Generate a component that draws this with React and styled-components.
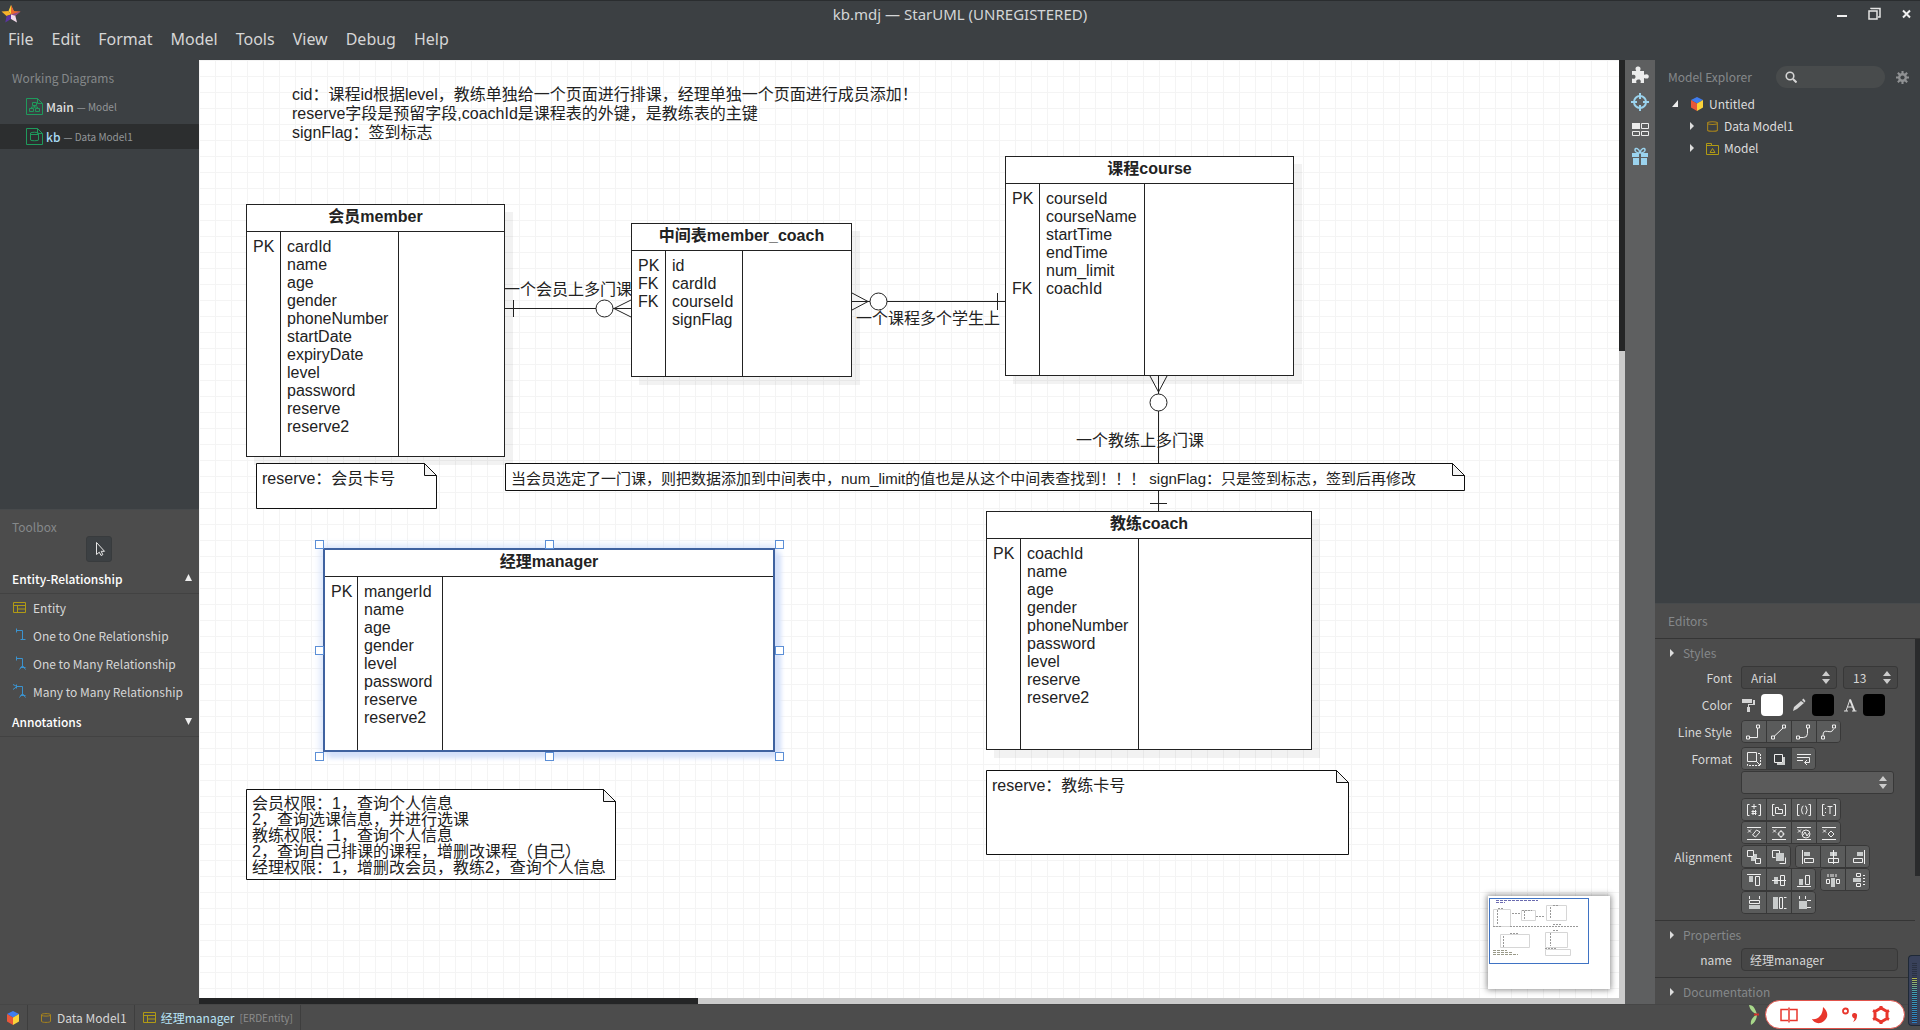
import React from "react";
import styled, { createGlobalStyle, css } from "styled-components";

const UI_FONT = '"Noto Sans CJK SC", "Noto Sans", sans-serif';
const MENU_FONT = '"Noto Sans", "Open Sans", sans-serif';
const DIAGRAM_FONT = '"Liberation Sans", "Noto Sans CJK SC", sans-serif';

const GlobalStyle = createGlobalStyle`
  *, *::before, *::after { box-sizing: border-box; }
  body {
    margin: 0;
    background: #3c4043;
    color: #d6d6d6;
    font: 12px/18px ${UI_FONT};
    overflow: hidden;
  }
  button, input, select { font: inherit; color: inherit; margin: 0; }
  h2, h3, ul { margin: 0; padding: 0; font: inherit; }
  ul { list-style: none; }
`;

/* ---------- window frame ---------- */

const Window = styled.div`
  height: 100vh;
  display: flex;
  flex-direction: column;
  border-top: 1px solid #2a2d2f;
`;

const TitleBar = styled.header`
  height: 26px;
  flex: none;
  display: grid;
  grid-template-columns: 1fr auto 1fr;
  align-items: center;
  font: 15px/20px ${MENU_FONT};
  color: #d4d6d7;
`;

const AppLogo = styled.div`
  padding-left: 1px;
  height: 20px;
  svg { display: block; }
`;

const WindowControls = styled.div`
  display: flex;
  justify-content: flex-end;
  gap: 14px;
  padding-right: 5px;
`;

const WindowButton = styled.button`
  border: 0;
  padding: 0;
  background: none;
  width: 18px;
  height: 18px;
  svg { display: block; }
`;

const MenuBar = styled.nav`
  height: 33px;
  flex: none;
  display: flex;
  gap: 18px;
  padding: 0 8px;
`;

const MenuItem = styled.button`
  border: 0;
  padding: 0;
  background: none;
  font: 16px/22px ${MENU_FONT};
  height: 24px;
`;

const Workspace = styled.div`
  flex: 1;
  min-height: 0;
  display: flex;
`;

const Sidebar = styled.aside`
  width: 199px;
  flex: none;
  display: flex;
  flex-direction: column;
`;

const RightPanel = styled(Sidebar)`
  width: 265px;
`;

const Pane = styled.section`
  flex: ${(p) => p.$share} 1 0;
  min-height: 0;
  overflow: hidden;
  background: ${(p) => (p.$raised ? "#4c4c4c" : "#3c4043")};
  border-top: ${(p) => (p.$raised ? "1px solid #474a4c" : "0")};
`;

const PaneTitle = styled.h2`
  color: #85888a;
  line-height: 18px;
  padding: ${(p) => p.$pad || "9px 12px"};
`;

/* ---------- working diagrams ---------- */

const DiagramRow = styled.li`
  display: flex;
  align-items: center;
  gap: 3px;
  height: 25px;
  margin-bottom: 5px;
  padding-left: 26px;
  background: ${(p) => (p.$active ? "#2c2e2f" : "none")};
  font-size: 10px;
  color: #939698;
  b { font-size: 12px; font-weight: 500; color: ${(p) => (p.$active ? "#a9dcf5" : "#dedede")}; }
`;

/* ---------- toolbox ---------- */

const CursorTool = styled.button`
  display: block;
  width: 26px;
  height: 26px;
  margin: 0 0 4px 86px;
  padding: 5px;
  border: 1px solid #383b3d;
  border-radius: 3px;
  background: #3c4043;
  svg { display: block; }
`;

const ToolGroup = styled.button`
  display: flex;
  align-items: center;
  justify-content: space-between;
  width: 100%;
  height: 28px;
  padding: 0 7px 0 12px;
  border: 0;
  border-bottom: 1px solid #424242;
  background: none;
  color: #fff;
  font-weight: 500;
`;

const ToolList = styled.div`
  padding-bottom: 3px;
`;

const ToolRow = styled.button`
  display: flex;
  align-items: center;
  gap: 7px;
  width: 100%;
  height: 28px;
  padding: 0 0 0 13px;
  border: 0;
  background: none;
`;

/* ---------- canvas ---------- */

const CanvasFrame = styled.main`
  flex: 1;
  min-width: 0;
  display: grid;
  grid-template-columns: 1fr 6px;
  grid-template-rows: 1fr 6px;
`;

const Canvas = styled.div`
  position: relative;
  overflow: hidden;
  background-color: #fff;
  background-image: linear-gradient(to right, #f4f4f4 1px, transparent 1px),
    linear-gradient(to bottom, #f4f4f4 1px, transparent 1px);
  background-size: 16px 16px;
  font: 16px/18px ${DIAGRAM_FONT};
  color: #222;
  white-space: nowrap;
`;

const ScrollTrack = styled.div`
  background: #cbcbcb;
  grid-column: ${(p) => (p.$horizontal ? "1 / 3" : "auto")};
`;

const ScrollThumb = styled.div`
  background: #242526;
  width: ${(p) => (p.$horizontal ? "35%" : "100%")};
  height: ${(p) => (p.$horizontal ? "100%" : "31%")};
`;

const Connectors = styled.svg`
  position: absolute;
  inset: 0;
  width: 100%;
  height: 100%;
  fill: #fff;
  stroke: #222;
`;

const EntityBox = styled.article`
  position: absolute;
  left: ${(p) => p.$x}px;
  top: ${(p) => p.$y}px;
  width: ${(p) => p.$w}px;
  height: ${(p) => p.$h}px;
  display: flex;
  flex-direction: column;
  background: #fff;
  border: 1px solid #222;
  box-shadow: 8px 8px 0 rgba(0, 0, 0, 0.05);
  ${(p) =>
    p.$selected &&
    css`
      border: 2px solid #3f62a0;
      box-shadow: 0 0 8px 2px #d0defa, 6px 6px 4px #dbe4fa;
    `}
`;

const EntityTitle = styled.h3`
  flex: none;
  height: 27px;
  padding-top: 3px;
  text-align: center;
  font-weight: bold;
  border-bottom: 1px solid #222;
`;

const EntityBody = styled.div`
  flex: 1;
  display: grid;
  grid-template-columns: ${(p) => p.$cols} 1fr;
`;

const EntityColumn = styled.ul`
  padding: 6px 0 0 6px;
  border-right: 1px solid #222;
  &:last-child { border-right: 0; }
  li { height: 18px; }
`;

const Handle = styled.i`
  position: absolute;
  left: ${(p) => p.$x};
  top: ${(p) => p.$y};
  width: 9px;
  height: 9px;
  margin: -5px;
  background: #fff;
  border: 1px solid #5c8fd6;
`;

const NoteBox = styled.div`
  position: absolute;
  left: ${(p) => p.$x}px;
  top: ${(p) => p.$y}px;
  width: ${(p) => p.$w}px;
  height: ${(p) => p.$h}px;
  padding: 7px 6px;
  white-space: pre;
  isolation: isolate;
  font-size: ${(p) => (p.$small ? 15 : 16)}px;
  line-height: ${(p) => (p.$compact ? "16px" : "18px")};
`;

const NoteShape = styled.svg`
  position: absolute;
  inset: 0;
  width: 100%;
  height: 100%;
  z-index: -1;
`;

const CanvasText = styled.div`
  position: absolute;
  left: ${(p) => p.$x}px;
  top: ${(p) => p.$y}px;
  white-space: pre;
  line-height: ${(p) => (p.$loose ? "19px" : "18px")};
`;

const Minimap = styled.div`
  position: absolute;
  right: 9px;
  bottom: 9px;
  width: 122px;
  height: 93px;
  background: #fff;
  box-shadow: 0 0 6px 1px rgba(0, 0, 0, 0.45);
  svg { display: block; }
`;

/* ---------- icon rail ---------- */

const Rail = styled.div`
  width: 30px;
  flex: none;
  display: flex;
  flex-direction: column;
  align-items: center;
  gap: 9px;
  padding-top: 6px;
  background: #5e5f60;
`;

const RailButton = styled.button`
  width: 18px;
  height: 18px;
  border: 0;
  padding: 0;
  background: none;
  svg { display: block; }
`;

/* ---------- model explorer ---------- */

const ExplorerHeader = styled.div`
  display: flex;
  align-items: center;
  padding: 6px 11px 5px 0;
`;

const SearchBox = styled.label`
  display: flex;
  align-items: center;
  gap: 4px;
  width: 109px;
  height: 22px;
  margin: 0 11px 0 auto;
  padding-left: 9px;
  border-radius: 11px;
  background: #484b4c;
  input { width: 72px; border: 0; padding: 0; background: none; outline: 0; }
`;

const TreeRow = styled.li`
  display: flex;
  align-items: center;
  height: 22px;
  padding-left: ${(p) => p.$indent}px;
  gap: ${(p) => p.$gap}px;
  color: #dcdcdc;
  svg { flex: none; }
`;

const TreeLabel = styled.span`
  display: flex;
  align-items: center;
  gap: 5px;
`;

/* ---------- editors ---------- */

const EditorsTitle = styled(PaneTitle)`
  border-bottom: 1px solid #353535;
`;

const EditorsScroller = styled.div`
  display: grid;
  grid-template-columns: 1fr 5px;
`;

const EditorsThumb = styled.div`
  height: 237px;
  background: #2a2b2c;
`;

const SectionTitle = styled.h3`
  display: flex;
  align-items: center;
  gap: 8px;
  height: 27px;
  padding-left: 15px;
  color: #85888a;
`;

const Section = styled.div`
  border-bottom: 1px solid #353535;
  padding-bottom: 6px;
`;

const Field = styled.div`
  display: grid;
  grid-template-columns: 77px 1fr;
  column-gap: 9px;
  align-items: center;
  margin-bottom: ${(p) => p.$after || 0}px;
`;

const FieldLabel = styled.label`
  text-align: right;
`;

const FieldRow = styled.div`
  display: flex;
  align-items: center;
  gap: ${(p) => p.$gap || 0}px;
`;

const SelectFrame = styled.div`
  position: relative;
  width: ${(p) => p.$w}px;
  svg { position: absolute; right: 7px; top: 5px; pointer-events: none; }
  select {
    appearance: none;
    display: block;
    width: 100%;
    height: 23px;
    padding: 0 9px;
    border: 1px solid #383838;
    border-radius: 3px;
    background: ${(p) => (p.$light ? "#5b5b5b" : "#464646")};
    outline: 0;
  }
`;

const Swatch = styled.button`
  width: 22px;
  height: 22px;
  padding: 0;
  border: 0;
  border-radius: 4px;
  margin-right: 9px;
  background: ${(p) => p.$color};
`;

const ColorIcon = styled.span`
  width: 14px;
  height: 14px;
  margin-right: 6px;
  svg { display: block; }
`;

const ButtonGroup = styled.div`
  display: flex;
  border: 1px solid #383838;
  border-radius: 4px;
  overflow: hidden;
`;

const IconButton = styled.button`
  width: 25px;
  height: 21px;
  padding: 2px 4px;
  border: 0;
  border-right: 1px solid #383838;
  background: ${(p) => (p.$pressed ? "#3b3e40" : "#5a5b5b")};
  &:last-child { border-right: 0; width: 23px; }
  svg { display: block; }
`;

const NameInput = styled.input`
  width: 157px;
  height: 23px;
  padding: 0 8px;
  border: 1px solid #383838;
  border-radius: 4px;
  background: #464646;
  outline: 0;
`;

/* ---------- status bar ---------- */

const StatusBar = styled.footer`
  height: 26px;
  flex: none;
  display: flex;
  background: #4c4c4c;
  border-top: 1px solid #464646;
`;

const Crumb = styled.div`
  display: flex;
  align-items: center;
  gap: 5px;
  padding: 0 7px 0 ${(p) => p.$lead}px;
  border-right: 1px solid #3e3e3e;
  strong { font-weight: 400; color: #b9e4f7; }
  small { font-size: 10px; color: #8d8d8d; }
`;

const ImeBar = styled.div`
  position: fixed;
  right: 15px;
  bottom: 1px;
  display: flex;
  align-items: center;
  justify-content: space-between;
  width: 140px;
  height: 29px;
  padding: 0 14px;
  border-radius: 15px;
  border: 1px solid #e2544c;
  background: #fff;
  button { border: 0; padding: 0; background: none; height: 18px; }
  svg { display: block; }
`;

const ImeLeaf = styled.svg`
  position: fixed;
  right: 160px;
  bottom: 4px;
`;

const Meter = styled.div`
  position: fixed;
  right: 0;
  bottom: 4px;
  width: 12px;
  height: 71px;
  padding: 6px 3px 2px;
  border: 1px solid #1f2937;
  border-right: 0;
  border-radius: 4px 0 0 4px;
  background: #39415a;
  div {
    height: 100%;
    background: repeating-linear-gradient(transparent 0 1px, #2a3142 1px 2px),
      linear-gradient(#39415a 0 26%, #b9b94a 26%, #3f9fb5 50%, #2c7ec0);
  }
`;

/* ---------- icons ---------- */

const Svg = ({ w = 16, h, vb, children, ...rest }) => (
  <svg width={w} height={h || w} viewBox={vb || `0 0 ${w} ${h || w}`} fill="none" aria-hidden="true" {...rest}>
    {children}
  </svg>
);

const StarLogo = () => (
  <Svg w={20}>
    <path d="M10 1l2.600 6L10 10.500 7.500 7z" fill="#fbd23a" />
    <path d="M7.500 7L0.500 7.500 5.600 12 10 10.500z" fill="#f7b32a" />
    <path d="M10 1l3 6 6.500.5-5.200 4.300L10 10.500z" fill="#e8672f" />
    <path d="M19.500 7.500l-5.200 4.300L10 10.500z" fill="#8a4a8f" />
    <path d="M14.300 11.800L16 18.500 10 15v-4.500z" fill="#f3dcec" />
    <path d="M10 15v-4.500l-4.400 1.500L4.300 18.500z" fill="#5b35a0" />
  </Svg>
);

const Cube = () => (
  <Svg w={14}>
    <path d="M7 0l6 3-6 3.500L1 3z" fill="#3f7df0" />
    <path d="M1 3l6 3.500V14l-6-3.500z" fill="#e8573a" />
    <path d="M13 3L7 6.500V14l6-3.500z" fill="#fbd23a" />
  </Svg>
);

const DiagramIcon = ({ data }) => (
  <Svg w={17} stroke="#1f9a5c">
    <path d="M0.500 0.500h11l5 5v11H0.500z M11.500 0.500v5h5" />
    {data ? <path d="M4.500 5c1-1 7-1 8 0v7c-1 1-7 1-8 0z M4.500 6.500h8" /> : <path d="M6.500 4.500h4v3h-4z M3.500 10.500h4v3h-4z M9.500 10.500h4v3h-4z M8.500 7.500v2M5.500 10V9h6v1" />}
  </Svg>
);

const TableIcon = () => (
  <Svg w={13} stroke="#b09a14">
    <path d="M0.500 1.500h12v10H0.500z M0.500 4.500h12 M4.500 4.500v7 M4.500 8h8" />
  </Svg>
);

const DataIcon = ({ w = 12 }) => (
  <Svg w={w} vb="0 0 12 12" stroke="#a8841c">
    <path d="M1.500 2.500c1-1.200 8-1.200 9 0v7c-1 1.200-8 1.200-9 0z M1.500 3.500c2 .8 7 .8 9 0" />
  </Svg>
);

const PackageIcon = () => (
  <Svg w={13} stroke="#b09a14">
    <path d="M0.500 1.500h5v2h7v9H0.500z M0.500 3.500h5 M4 10.500h5l-2.500-4z" />
  </Svg>
);

const RelationIcon = ({ kind }) => (
  <Svg w={13} h={16} stroke="#3b93cf">
    <path d="M3.500 2.500h6v9 M3.500 0.500v4 M7.500 11.500h5" />
    {kind > 0 && <path d="M9.500 9.500l-3 4M9.500 9.500l3 4" />}
    {kind > 1 && <path d="M4 2.500l-4-2M4 2.500l-4 3" />}
  </Svg>
);

const Caret = ({ dir = "right" }) => {
  const shapes = { up: "M0 7h7L3.500 0z", down: "M0 1h7L3.500 8z", corner: "M6 1v7H0z" };
  return (
    <Svg w={7} h={10}>
      <path d={shapes[dir]} fill="#eee" />
    </Svg>
  );
};

const SmallCaret = () => (
  <Svg w={5} h={8}>
    <path d="M0 0l4 4-4 4z" fill="#ddd" />
  </Svg>
);

const Spinner = () => (
  <Svg w={8} h={13}>
    <path d="M0 5h8L4 0z M0 8h8L4 13z" fill="#ccc" />
  </Svg>
);

const Gear = ({ size = 13, color = "#8f9193", hole = "#3c4043" }) => (
  <Svg w={size} vb="0 0 16 16">
    <circle cx="8" cy="8" r="5.500" fill={color} />
    <path d="M8 0v16M0 8h16M2.300 2.300l11.400 11.400M13.700 2.300L2.300 13.700" stroke={color} strokeWidth="2.600" />
    <circle cx="8" cy="8" r="2.600" fill={hole} />
  </Svg>
);

const ImeGear = () => (
  <Svg w={18} stroke="#e8362c" strokeWidth="3">
    <path d="M9 2l6 3.500v7L9 16l-6-3.500v-7z" strokeLinejoin="round" />
    <path d="M9 0v3M9 15v3M1 4.500L4 6M14 12l3 1.500M17 4.500L14 6M4 12l-3 1.500" />
  </Svg>
);

/* Glyphs of the editor buttons, drawn on a 16 x 16 grid: [outline, solid, dashed] */
const GLYPHS = {
  rect: ["M3 13.500h8.500V4 M0.500 12h3v3h-3z M10.500 1h3v3h-3z"],
  oblique: ["M3 12.500L12 4 M0.500 12h3v3h-3z M11.500 1h3v3h-3z"],
  round: ["M3 13.500h4.500q4 0 4-4V4 M0.500 12h3v3h-3z M10.500 1h3v3h-3z"],
  curve: ["M2 12c0-10 8 0 10.500-7 M0.500 12h3v3h-3z M11.500 1h3v3h-3z"],
  resize: ["M1.500 1.500h9v9h-9z M10 10l4 4", null, "M12 2.500h2.500v12h-13V12"],
  shadow: ["M3.500 3.500h8v8h-8z", "M12 6h2v8H6v-2h6z"],
  wrap: ["M1 3.500h14M1 6.500h12.500v5H9 M1 9.500h6 M11 9l-2.500 2.500L11 14"],
  vis: ["M3.500 2.500h-2v11h2 M12.500 2.500h2v11h-2 M5.500 4.500h5M8 2v5 M5.500 9.500h5 M5.500 11.500h5 M7 8v5 M9.500 8v5"],
  ns: ["M3.500 2.500h-2v11h2 M12.500 2.500h2v11h-2 M4.500 5.500h3v2h4v4h-7z"],
  prop: ["M3.500 2.500h-2v11h2 M12.500 2.500h2v11h-2 M7.500 4q-1.500 0-1.500 2t-1 2q1 0 1 2t1.500 2 M9 4q1.500 0 1.500 2t1 2q-1 0-1 2T9 12"],
  type: ["M3.500 2.500h-2v11h2 M12.500 2.500h2v11h-2 M6.500 4.500h5M9 4.500V12 M4.500 6v1M4.500 10v1"],
  noAttr: ["M1 2.500h14M1 14.500h14 M2 4.500l3 3M5 4.500l-3 3 M6.500 10l4-5 3.500 2-4.500 5z"],
  noOp: ["M1 2.500h14M1 14.500h14 M2 4.500l3 3M5 4.500l-3 3 M10 6.500a2.500 2.500 0 1 1 0 5 2.500 2.500 0 1 1 0-5z M10 5v2M10 11v2M6.500 9h2M11.500 9h2"],
  noRec: ["M1 2.500h14M1 14.500h14 M2 4.500l3 3M5 4.500l-3 3 M10 5a4 4 0 1 1 0 8 4 4 0 1 1 0-8z M7 10l2-3 2 4 2-3"],
  noLit: ["M1 2.500h14M1 14.500h14 M2 4.500l3 3M5 4.500l-3 3 M10 6l3 3-3 3-3-3z"],
  front: ["M1.500 1.500h6v6h-6z M9.500 9.500h5v5h-5z", "M8 5h3v4H9v3H5V8h3z"],
  back: ["M1.500 1.500h7v3 M1.500 1.500v7h3 M8.500 14.500h6v-6", "M5 4h8v8H5z"],
  left: ["M2.500 1v14 M4.500 9.500h9v4h-9z", "M4 3h6v4H4z"],
  center: ["M8.500 1v14 M3.500 9.500h10v4h-10z", "M5 3h7v4H5z"],
  right: ["M14.500 1v14 M3.500 9.500h9v4h-9z", "M7 3h6v4H7z"],
  top: ["M1 2.500h14 M9.500 4.500h4v9h-4z", "M3 4h4v6H3z"],
  middle: ["M1 8.500h14 M9.500 3.500h4v10h-4z", "M3 5h4v7H3z"],
  bottom: ["M1 14.500h14 M9.500 3.500h4v9h-4z", "M3 7h4v6H3z"],
  spaceH: ["M1.500 7.500h3v4h-3z M11.500 7.500h3v4h-3z M3 2v3M6 2v3M8 2v3M11 2v3", "M6 6h4v9H6z"],
  spaceV: ["M6.500 1.500h4v3h-4z M6.500 11.500h4v3h-4z M13 3.500h2M13 6.500h2M13 9.500h2M13 12.500h2", "M3 6h8v4H3z"],
  width: ["M3.500 1v3M13.500 1v3 M3.500 5.500h10v3h-10z", "M3 10h11v4H3z"],
  height: ["M8.500 2.500h3v11h-3z M13 2.500h2.500M13 13.500h2.500", "M2 2h5v12H2z"],
  size: ["M3.500 1v3M9.500 1v3 M11 5.500h4M11 12.500h4", "M3 6h8v8H3z"],
};

const Glyph = ({ name }) => {
  const [line, solid, dashed] = GLYPHS[name];
  return (
    <Svg w={16}>
      {solid && <path d={solid} fill="#c9cccc" />}
      <path d={line} stroke="#efefef" />
      {dashed && <path d={dashed} stroke="#efefef" strokeDasharray="2 1" />}
    </Svg>
  );
};

const Buttons = ({ items }) => (
  <ButtonGroup>
    {items.map(([glyph, label, pressed]) => (
      <IconButton key={glyph} type="button" aria-label={label} $pressed={pressed}>
        <Glyph name={glyph} />
      </IconButton>
    ))}
  </ButtonGroup>
);

const ButtonField = ({ label, after, groups }) => (
  <Field $after={after}>
    <FieldLabel as="span">{label}</FieldLabel>
    <FieldRow $gap={4}>
      {groups.map((items) => <Buttons key={items[0][0]} items={items} />)}
    </FieldRow>
  </Field>
);

/* ---------- diagram ---------- */

const ENTITIES = [
  { name: "会员member", x: 47, y: 144, w: 259, h: 253, cols: "34px 118px", keys: ["PK"], fields: ["cardId", "name", "age", "gender", "phoneNumber", "startDate", "expiryDate", "level", "password", "reserve", "reserve2"] },
  { name: "中间表member_coach", x: 432, y: 163, w: 221, h: 154, cols: "34px 77px", keys: ["PK", "FK", "FK"], fields: ["id", "cardId", "courseId", "signFlag"] },
  { name: "课程course", x: 806, y: 96, w: 289, h: 220, cols: "34px 105px", keys: ["PK", "", "", "", "", "FK"], fields: ["courseId", "courseName", "startTime", "endTime", "num_limit", "coachId"] },
  { name: "教练coach", x: 787, y: 451, w: 326, h: 239, cols: "34px 118px", keys: ["PK"], fields: ["coachId", "name", "age", "gender", "phoneNumber", "password", "level", "reserve", "reserve2"] },
  { name: "经理manager", x: 124, y: 488, w: 452, h: 204, cols: "33px 85px", keys: ["PK"], fields: ["mangerId", "name", "age", "gender", "level", "password", "reserve", "reserve2"], selected: true },
];

const NEAR = "-5px";
const MID = "calc(50% + 1px)";
const FAR = "calc(100% + 7px)";
const HANDLES = [[NEAR, NEAR], [MID, NEAR], [FAR, NEAR], [NEAR, MID], [FAR, MID], [NEAR, FAR], [MID, FAR], [FAR, FAR]];

const Entity = ({ name, x, y, w, h, cols, keys, fields, selected }) => (
  <EntityBox $x={x} $y={y} $w={w} $h={h} $selected={selected}>
    <EntityTitle>{name}</EntityTitle>
    <EntityBody $cols={cols}>
      <EntityColumn>{keys.map((k, i) => <li key={i}>{k}</li>)}</EntityColumn>
      <EntityColumn>{fields.map((f) => <li key={f}>{f}</li>)}</EntityColumn>
      <EntityColumn />
    </EntityBody>
    {selected && HANDLES.map(([hx, hy]) => <Handle key={hx + hy} $x={hx} $y={hy} />)}
  </EntityBox>
);

const Note = ({ x, y, w, h, children, ...rest }) => (
  <NoteBox $x={x} $y={y} $w={w} $h={h} {...rest}>
    <NoteShape viewBox={`0 0 ${w} ${h}`} aria-hidden="true">
      <path d={`M.5.5H${w - 12.5}l12 12V${h - 0.5}H.5z`} fill="#fff" stroke="#111" />
      <path d={`M${w - 12.5}.5v12h12z`} fill="#f4f4f4" stroke="#111" />
    </NoteShape>
    {children}
  </NoteBox>
);

const ConnectorLines = () => (
  <Connectors aria-hidden="true">
    <path d="M306 248.500H432 M314.500 240v17 M432 240l-17 8.500 17 8.500" />
    <circle cx="405.500" cy="248.500" r="8.500" />
    <path d="M653 241.500H806 M798.500 233v17 M653 233l16 8.500-16 8.500" />
    <circle cx="679.500" cy="241.500" r="8.500" />
    <path d="M959.500 316V452 M951 443.500h17 M951 316l8.500 16 8.500-16" />
    <circle cx="959.500" cy="342.500" r="8.500" />
  </Connectors>
);

const MinimapDrawing = () => (
  <Svg w={122} h={93}>
    <g stroke="#d6d6d6">
      <path d="M5.500 13.500h17v17h-17zM33.500 14.500h14v10h-14zM58.500 9.500h20v15h-20zM57.500 36.500h22v15h-22zM12.500 38.500h29v13h-29zM57.500 53.500h25v6h-25z" />
    </g>
    <g stroke="#999" strokeDasharray="2 1">
      <path d="M10 12.500h6M34 14.500h10M65 9.500h6M22 30.500h68M24 17.500h9M48 20.500h8M65 28.500h8M65 34.500h6M22 37.500h8M57 52.500h12M5 30.500h9" />
      <path d="M9.500 14v15M36.500 15v8M62.500 11v11M62.500 37v13M15.500 40v12" />
    </g>
    <path d="M8 4.500h42M8 6.500h9" stroke="#6a6ab0" strokeDasharray="3 1" />
    <path d="M5 54.500h14M5 56.500h20M5 58.500h25" stroke="#998" strokeDasharray="3 1" />
    <rect x="1.500" y="2.500" width="99" height="65" stroke="#3f73c4" />
  </Svg>
);

/* ---------- page ---------- */

const MENUS = ["File", "Edit", "Format", "Model", "Tools", "View", "Debug", "Help"];

export default function App() {
  return (
    <Window>
      <GlobalStyle />
      <TitleBar>
        <AppLogo><StarLogo /></AppLogo>
        <span>kb.mdj — StarUML (UNREGISTERED)</span>
        <WindowControls>
          <WindowButton aria-label="Minimize"><Svg w={18}><path d="M4 11h10" stroke="#f0f0f0" strokeWidth="2" /></Svg></WindowButton>
          <WindowButton aria-label="Restore"><Svg w={18}><path d="M4 6h8v8H4z M6 4V3.500h9V12h-2" stroke="#e4e4e4" strokeWidth="1.500" /></Svg></WindowButton>
          <WindowButton aria-label="Close"><Svg w={18}><path d="M6 5.500l7 7M13 5.500l-7 7" stroke="#f0f0f0" strokeWidth="2" /></Svg></WindowButton>
        </WindowControls>
      </TitleBar>
      <MenuBar>
        {MENUS.map((m) => <MenuItem key={m} type="button">{m}</MenuItem>)}
      </MenuBar>

      <Workspace>
        <Sidebar>
          <Pane $share={449}>
            <PaneTitle $pad="9px 12px 7px">Working Diagrams</PaneTitle>
            <ul>
              <DiagramRow><DiagramIcon /><b>Main</b><span>— Model</span></DiagramRow>
              <DiagramRow $active><DiagramIcon data /><b>kb</b><span>— Data Model1</span></DiagramRow>
            </ul>
          </Pane>
          <Pane $share={495} $raised>
            <PaneTitle $pad="8px 12px 0">Toolbox</PaneTitle>
            <CursorTool aria-label="Select">
              <Svg w={14}><path d="M4.500 0.500v12l2.800-2.300 1.700 3.300 1.800-.8-1.600-3.400h3.300z" stroke="#e6e6e6" /></Svg>
            </CursorTool>
            <ToolGroup type="button">Entity-Relationship<Caret dir="up" /></ToolGroup>
            <ToolList>
              <ToolRow type="button"><TableIcon />Entity</ToolRow>
              <ToolRow type="button"><RelationIcon kind={0} />One to One Relationship</ToolRow>
              <ToolRow type="button"><RelationIcon kind={1} />One to Many Relationship</ToolRow>
              <ToolRow type="button"><RelationIcon kind={2} />Many to Many Relationship</ToolRow>
            </ToolList>
            <ToolGroup type="button">Annotations<Caret dir="down" /></ToolGroup>
          </Pane>
        </Sidebar>

        <CanvasFrame>
          <Canvas>
            <CanvasText $x={93} $y={25} $loose>{"cid：课程id根据level，教练单独给一个页面进行排课，经理单独一个页面进行成员添加！\nreserve字段是预留字段,coachId是课程表的外键，是教练表的主键\nsignFlag：签到标志"}</CanvasText>
            <ConnectorLines />
            {ENTITIES.map((e) => <Entity key={e.name} {...e} />)}
            <Note x={57} y={403} w={181} h={46}>reserve：会员卡号</Note>
            <Note x={306} y={403} w={960} h={28} $small>当会员选定了一门课，则把数据添加到中间表中，num_limit的值也是从这个中间表查找到！！！ signFlag：只是签到标志，签到后再修改</Note>
            <Note x={787} y={710} w={363} h={85}>reserve：教练卡号</Note>
            <Note x={47} y={729} w={370} h={91} $compact>{"会员权限：1，查询个人信息\n2，查询选课信息，并进行选课\n教练权限：1，查询个人信息\n2，查询自己排课的课程，增删改课程（自己）\n经理权限：1，增删改会员，教练2，查询个人信息"}</Note>
            <CanvasText $x={305} $y={221}>一个会员上多门课</CanvasText>
            <CanvasText $x={657} $y={250}>一个课程多个学生上</CanvasText>
            <CanvasText $x={877} $y={372}>一个教练上多门课</CanvasText>
            <Minimap><MinimapDrawing /></Minimap>
          </Canvas>
          <ScrollTrack><ScrollThumb /></ScrollTrack>
          <ScrollTrack $horizontal><ScrollThumb $horizontal /></ScrollTrack>
        </CanvasFrame>

        <Rail>
          <RailButton aria-label="Extensions">
            <Svg w={18}><path d="M1 5h4.200C3.500 1.500 5.500.500 7 .500s3.500 1 2 4.500H13v3.800c3.500-1.500 4.800.2 4.800 1.700s-1.300 3-4.800 1.500V17H9.500c1-3-.8-3.500-2-3.500s-3 .5-2 3.500H1v-4.500c3 1 3.500-.7 3.500-1.800S4 8 1 9z" fill="#ececec" /></Svg>
          </RailButton>
          <RailButton aria-label="Locate">
            <Svg w={18} stroke="#9bd3ee" strokeWidth="2"><circle cx="9" cy="9" r="6" /><path d="M9 0v6M9 12v6M0 9h6M12 9h6" /></Svg>
          </RailButton>
          <RailButton aria-label="Layout">
            <Svg w={18}><path d="M1 3h8v6H1z" fill="#ececec" /><path d="M10.500 3.500h7v5h-7zM1.500 11.500h7v4h-7zM10.500 11.500h7v4h-7z" stroke="#ececec" /></Svg>
          </RailButton>
          <RailButton aria-label="Gift">
            <Svg w={18}><path d="M1 6h7v4H1zM10 6h7v4h-7zM2 11h6v7H2zM10 11h6v7h-6z" fill="#9bd3ee" /><path d="M9 6C6 6 3.500 4.500 4 2.500S8 1 9 6c1-5 4.500-5.500 5-3.500S12 6 9 6z" stroke="#9bd3ee" strokeWidth="1.500" /></Svg>
          </RailButton>
        </Rail>

        <RightPanel>
          <Pane $share={544}>
            <ExplorerHeader>
              <PaneTitle $pad="0 0 0 13px">Model Explorer</PaneTitle>
              <SearchBox>
                <Svg w={12}><circle cx="5" cy="5" r="3.800" stroke="#d5d5d5" strokeWidth="1.600" /><path d="M8 8l3.500 3.500" stroke="#d5d5d5" strokeWidth="2" /></Svg>
                <input type="text" aria-label="Search models" />
              </SearchBox>
              <Gear />
            </ExplorerHeader>
            <ul>
              <TreeRow $indent={17} $gap={11}><Caret dir="corner" /><TreeLabel><Cube />Untitled</TreeLabel></TreeRow>
              <TreeRow $indent={35} $gap={11}><SmallCaret /><TreeLabel><DataIcon w={13} />Data Model1</TreeLabel></TreeRow>
              <TreeRow $indent={35} $gap={11}><SmallCaret /><TreeLabel><PackageIcon />Model</TreeLabel></TreeRow>
            </ul>
          </Pane>
          <Pane $share={400} $raised>
            <EditorsTitle $pad="8px 13px">Editors</EditorsTitle>
            <EditorsScroller>
              <div>
                <Section>
                  <SectionTitle><SmallCaret />Styles</SectionTitle>
                  <Field $after={5}>
                    <FieldLabel htmlFor="font">Font</FieldLabel>
                    <FieldRow $gap={6}>
                      <SelectFrame $w={96}><select id="font" defaultValue="Arial"><option>Arial</option></select><Spinner /></SelectFrame>
                      <SelectFrame $w={55}><select aria-label="Font size" defaultValue="13"><option>13</option></select><Spinner /></SelectFrame>
                    </FieldRow>
                  </Field>
                  <Field $after={4}>
                    <FieldLabel htmlFor="fill">Color</FieldLabel>
                    <FieldRow>
                      <ColorIcon><Svg w={14}><path d="M1 1h10v4H1zM12 2h2v5H8v2h1v5H6V9h1V6h5z" fill="#d5d5d5" /></Svg></ColorIcon>
                      <Swatch id="fill" $color="#fff" aria-label="Fill color" />
                      <ColorIcon><Svg w={14}><path d="M1 13l1-4 7-6 3 2-7 6zM10 2l1.500-1.500L13.500 3 12.500 4.500z" fill="#d5d5d5" /></Svg></ColorIcon>
                      <Swatch $color="#000" aria-label="Line color" />
                      <ColorIcon><Svg w={14}><path d="M1 13h4M9 13h4.500M3 13L7 1.500M5 9h5" stroke="#e0e0e0" /><path d="M7 1.500L11.500 13" stroke="#e0e0e0" strokeWidth="2" /></Svg></ColorIcon>
                      <Swatch $color="#000" aria-label="Font color" />
                    </FieldRow>
                  </Field>
                  <ButtonField label="Line Style" after={4} groups={[[["rect", "Rectilinear"], ["oblique", "Oblique"], ["round", "Rounded"], ["curve", "Curve"]]]} />
                  <ButtonField label="Format" after={1} groups={[[["resize", "Auto resize"], ["shadow", "Shadow", true], ["wrap", "Word wrap"]]]} />
                  <Field $after={4}>
                    <span />
                    <SelectFrame $w={153} $light><select aria-label="Stereotype display"><option></option></select><Spinner /></SelectFrame>
                  </Field>
                  <ButtonField groups={[[["vis", "Show visibility"], ["ns", "Show namespace"], ["prop", "Show property"], ["type", "Show type"]]]} />
                  <ButtonField after={1} groups={[[["noAttr", "Suppress attributes"], ["noOp", "Suppress operations"], ["noRec", "Suppress receptions"], ["noLit", "Suppress literals"]]]} />
                  <ButtonField label="Alignment" groups={[[["front", "Bring to front"], ["back", "Send to back"]], [["left", "Align left"], ["center", "Align center"], ["right", "Align right"]]]} />
                  <ButtonField groups={[[["top", "Align top"], ["middle", "Align middle"], ["bottom", "Align bottom"]], [["spaceH", "Space horizontally"], ["spaceV", "Space vertically"]]]} />
                  <ButtonField groups={[[["width", "Same width"], ["height", "Same height"], ["size", "Same size"]]]} />
                </Section>
                <Section>
                  <SectionTitle><SmallCaret />Properties</SectionTitle>
                  <Field>
                    <FieldLabel htmlFor="name">name</FieldLabel>
                    <NameInput id="name" type="text" defaultValue="经理manager" />
                  </Field>
                </Section>
                <SectionTitle><SmallCaret />Documentation</SectionTitle>
              </div>
              <EditorsThumb />
            </EditorsScroller>
          </Pane>
        </RightPanel>
      </Workspace>

      <StatusBar>
        <Crumb $lead={6}><Cube /></Crumb>
        <Crumb $lead={12}><DataIcon />Data Model1</Crumb>
        <Crumb $lead={8}><TableIcon /><strong>经理manager</strong><small>[ERDEntity]</small></Crumb>
      </StatusBar>

      <ImeLeaf width="12" height="22" viewBox="0 0 12 22" aria-hidden="true">
        <path d="M1 1c5 0 6 4 8 9C5 9 2 6 1 1zM3 21c-1-5 2-8 6-11 0 4-2 9-6 11z" fill="#a8d88a" />
        <path d="M6 10.500h5" stroke="#d0312b" strokeWidth="2" />
      </ImeLeaf>
      <ImeBar>
        <button type="button" aria-label="Chinese input"><Svg w={18} stroke="#e8362c" strokeWidth="1.500"><path d="M8 3.500H1v11h7M10 3.500h7v11h-7M9 1.500v15" /></Svg></button>
        <button type="button" aria-label="Half width"><Svg w={18}><path d="M12 1c5 4 6 10 1 14s-10 2-12-2c5 1 11-3 11-12z" fill="#e8362c" /></Svg></button>
        <button type="button" aria-label="Punctuation"><Svg w={18}><circle cx="4.500" cy="5" r="2.500" stroke="#e8362c" strokeWidth="1.800" /><path d="M11 9a2.500 2.500 0 1 1 5 1c0 3-1.500 5-4 6 .5-1 1.500-2 1.500-3.500C12 12 11 11 11 9z" fill="#e8362c" /></Svg></button>
        <button type="button" aria-label="Input settings"><ImeGear /></button>
      </ImeBar>
      <Meter><div /></Meter>
    </Window>
  );
}
